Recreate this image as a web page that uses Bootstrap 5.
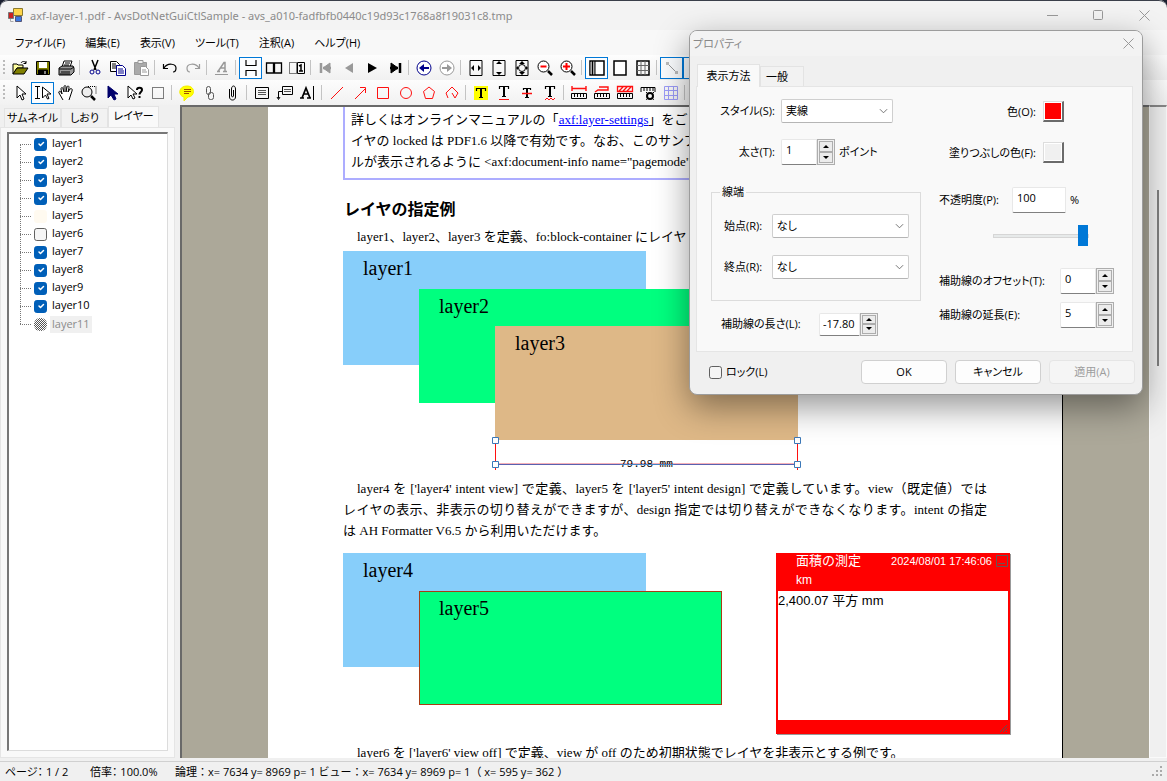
<!DOCTYPE html>
<html lang="ja">
<head>
<meta charset="utf-8">
<meta name="viewport" content="width=device-width, initial-scale=1">
<title>axf-layer-1.pdf - AvsDotNetGuiCtlSample</title>
<link href="https://cdn.jsdelivr.net/npm/bootstrap@5.3.0/dist/css/bootstrap.min.css" rel="stylesheet">
<style>
:root{--ui:"Open Sans","Noto Sans CJK JP",sans-serif;--doc:"Liberation Serif","Noto Sans CJK JP",serif}
body{font:11px/16px var(--ui);font-feature-settings:"palt";color:#000;background:#1b2030}
button,input,select{font:inherit;font-feature-settings:inherit;color:inherit}
.app-window{background:#f0f0f0;border-radius:8px 8px 0 0}
.title-strip{height:30px;background:#f3f3f3;color:#8b8b8b;border-radius:8px 8px 0 0;border-top:1px solid #3a3f4a;padding-left:8px;font-family:"Noto Sans",sans-serif}
.caption-btn{width:46px;height:29px;border:0;background:none;padding:0;color:#888}
.menu-strip{height:25px;background:#f8f8f8;padding-left:15px;gap:20px}
.menu-strip a{color:#000;text-decoration:none}
.tool-strip{height:25px;padding-left:3px;background:linear-gradient(#fdfdfd,#f1f1f1)}
.grip{width:2px;height:15px;margin-right:3px;background:repeating-linear-gradient(#bbb 0 2px,transparent 2px 4px)}
.tool-strip button{width:23px;height:22px;padding:0;border:1px solid transparent;background:none;display:flex;align-items:center;justify-content:center;flex:none}
.tool-strip button.on{border-color:#0078d7;background:#fbfdff}
.tool-strip i{width:1px;height:15px;background:#c3c3c3;margin:0 3px 0 2px;flex:none}
svg{display:block;fill:none;stroke:#000;stroke-width:1}
.ic{width:18px;height:18px}
.red{stroke:#ff1010}
.gray{stroke:#999}
.side{width:175px;padding-top:1px}
.side-tabs{height:21px}
.side-tab,.dlg-tab{border:1px solid #e3e3e3;border-bottom:0;background:#f2f2f2;padding:0}
.side-tab{height:19px;white-space:nowrap}
.side-tab.cur{height:21px;background:#f9f9f9;z-index:1;padding-bottom:2px}
.side-body{background:#f9f9f9;border:1px solid #e5e5e5;padding:4px 6px 6px 6px}
.tree{border:1px solid #dcdcdc;border-top:2px solid #777;border-left:2px solid #777;background:#fff;padding:1px 0 0 11px}
.tree li{height:18px;position:relative;padding-left:14px;display:flex;align-items:center;gap:5px}
.tree li::before{content:"";position:absolute;left:0;top:9px;width:11px;border-top:1px dotted #777}
.tree li::after{content:"";position:absolute;left:0;top:9px;height:18px;border-left:1px dotted #777}
.tree li:last-child::after{display:none}
.tree label{padding:0 0 2px}
.tick{width:13px;height:13px;margin:0;border:1px solid #606060;border-radius:3px;flex:none;background-color:#f5f5f5;float:none}
.tick:checked{background-color:#005fb8;border-color:#005fb8;background-size:10px}
.tick.pale{background:#fffaf0;border-color:#fffaf0}
.tick.mesh{opacity:1;border:0;border-radius:6px;background:repeating-conic-gradient(#555 0 25%,#fff 0 50%) 0 0/2px 2px}
.mesh+label{background:#f0f0f0;color:#8b8b8b;padding:0 2px 1px;margin-left:-2px}
.viewer{border-top:2px solid #696969;border-left:2px solid #696969;background:#aca899;margin-left:5px}
.sheet{background:#fff;border-right:1px solid #000;margin:0 86px;padding:0 75px;font:13px/21px var(--doc);font-feature-settings:normal;color:#000}
.ln{display:block;text-align-last:justify;white-space:nowrap}
.first{padding-left:14px}
.notice{border:2px solid #adadff;border-top:0;padding:2px 6px 6px;height:73px}
.notice div,.flow-line{white-space:nowrap}
.notice a{color:#00f}
.sheet h2{font:bold 16px/24px "Liberation Sans","Noto Sans CJK JP",sans-serif;margin:18px 0 4px 1px}
.stage{position:relative;font-size:20px}
.lay{position:absolute;width:303px;height:114px;padding:7px 20px}
.sky{background:#87cefa;left:0;top:0}
.spring{background:#00ff7f;left:76px;top:38px}
.wood{background:#deb887;left:152px;top:75px}
.measure{position:absolute;left:147px;top:183px}
.measure text{font:11px "Liberation Mono",monospace;fill:#000;stroke:none}
.memo{position:absolute;left:433px;top:0;width:234px;height:181px;background:#f00;font:13px/20px "Liberation Sans","Noto Sans CJK JP",sans-serif;border:solid #f00;border-width:0 2px;box-shadow:1px 1px 0 #999}
.memo header{height:38px;color:#fff;padding:0 0 0 18px;line-height:18px}
.memo header .unit{font-size:12px}
.memo .when{font-size:11px}
.memo-body{height:129px;background:#fff;line-height:19px}
.vbar{width:18px;background:#f0f0f0;border:1px solid #fafafa;border-top:2px solid #888;padding:83px 0 0 7px}
.vbar div{width:2px;height:176px;background:#808080}
.status{height:20px;border-top:1px solid #d0d0d0;padding-left:5px;margin-top:3px;white-space:pre}
.status .coords{font-feature-settings:normal}
.dlg{position:absolute;right:24px;top:30px;width:454px;border:1px solid #9c9c9c;border-radius:8px;background:#f0f0f0;box-shadow:0 12px 34px rgba(0,0,0,.42);z-index:5;overflow:clip}
.dlg-title{height:25px;background:#f3f3f3;color:#888;padding-left:3px}
.dlg-tabs{height:30px;padding-left:7px}
.dlg-tab{height:20px;width:44px;text-align:left;padding-left:5px}
.dlg-tab.cur{height:23px;width:63px;background:#f9f9f9;padding:0;text-align:center;z-index:1;margin-bottom:-1px}
.dlg-body{margin:0 9px 0 6px;height:266px;border:1px solid #e5e5e5;background:#f9f9f9}
.dlg-foot{height:42px;padding:0 7px 2px 19px}
.colL{width:224px}
.r24,.r26,.r21{display:flex;align-items:center;white-space:nowrap}
.r24{height:24px}.r26{height:26px}.r21{height:21px}
.l78{width:78px;margin-right:6px;text-align:right}
.pick{appearance:none;height:24px;width:112px;border:1px solid #cfcfcf;border-bottom-color:#b5b5b5;border-radius:2px;padding:0 4px;background:#fff url("data:image/svg+xml,%3Csvg xmlns='http://www.w3.org/2000/svg' viewBox='0 0 10 6'%3E%3Cpath d='M1 1l4 4 4-4' fill='none' stroke='%23666'/%3E%3C/svg%3E") no-repeat right 4px center/9px 6px}
.pick.wide{width:138px}
.num{height:26px;border:1px solid #e8e8e8;border-bottom-color:#808080;padding:0 4px 5px;background:#fff;width:36px;border-radius:2px 0 0 2px}
.spin{width:18px;height:26px;border:1px solid #adadad;padding:1px;background:#f0f0f0;display:flex;flex-direction:column}
.spin button{flex:1;padding:0;border:1px solid #adadad;background:#ececec;display:flex;align-items:center;justify-content:center}
.spin svg{fill:#000;stroke:none}
.low .num{height:23px;width:41px;padding:0 3px 2px}.low .spin{height:23px}
fieldset.ends{margin:19px 0 0 14px;border:1px solid #dcdcdc;padding:14px 11px 21px 12px;width:210px}
.ends legend{float:none;width:auto;font-size:11px;line-height:16px;height:16px;margin:0 0 0 -4px;padding:0 2px}
.ends label{width:48px}
.swatch{width:21px;height:21px;padding:0;border:1px solid #ddd;border-right:2px solid #6b6b6b;border-bottom:2px solid #6b6b6b;background:#f0f0f0;box-shadow:inset 0 0 0 1px #fff}
.slide{appearance:none;width:96px;height:21px;margin:12px 0 22px 72px;background:none;display:block}
.slide::-webkit-slider-runnable-track{height:4px;background:#e7eaea;border:1px solid #d6d6d6}
.slide::-webkit-slider-thumb{appearance:none;width:10px;height:21px;margin-top:-10px;background:#0078d7}
.push{width:86px;height:24px;border:1px solid #d0d0d0;border-radius:4px;background:#fdfdfd;padding:0}
.push:disabled{color:#9d9d9d;background:#f5f5f5;border-color:#e5e5e5}
</style>
</head>
<body>
<div class="app-window vh-100 d-flex flex-column overflow-hidden position-relative">

<header class="title-strip d-flex align-items-center flex-shrink-0">
  <svg width="15" height="15" viewBox="0 0 15 15"><path d="M5.500.5h9v7h-9z" fill="#ffd54a" stroke="#8a7a30"/><path d="M.5 4.500h5v6h-5z" fill="#c22" stroke="#777"/><path d="M7.500 8.500h6v5h-6z" fill="#3b78e0" stroke="#557"/><path d="M2.500 11v2.500h3" stroke="#aaa"/></svg>
  <span class="flex-fill" style="padding-left:7px">axf-layer-1.pdf - AvsDotNetGuiCtlSample - avs_a010-fadfbfb0440c19d93c1768a8f19031c8.tmp</span>
  <button class="caption-btn" aria-label="最小化"><svg class="mx-auto gray" width="11" height="11"><path d="M0 5.500h11"/></svg></button>
  <button class="caption-btn" aria-label="最大化"><svg class="mx-auto gray" width="11" height="11"><rect x=".5" y=".5" width="9" height="9" rx="1"/></svg></button>
  <button class="caption-btn" aria-label="閉じる"><svg class="mx-auto gray" width="11" height="11"><path d="M.5.5l10 10M10.500.5l-10 10"/></svg></button>
</header>

<nav class="menu-strip d-flex align-items-center flex-shrink-0">
  <a href="#">ファイル(F)</a><a href="#">編集(E)</a><a href="#">表示(V)</a><a href="#">ツール(T)</a><a href="#">注釈(A)</a><a href="#">ヘルプ(H)</a>
</nav>

<div class="tool-strip d-flex align-items-center flex-shrink-0">
  <span class="grip"></span>
  <button aria-label="開く"><svg class="ic"><path d="M2 5h4l1 1h5v3H6l-4 6z" fill="#ffffa0"/><path d="M2 15l4-6h11l-4 6z" fill="#808000"/><path d="M10 4c1-2 4-2 5 0m0-2v2.500h-2.500"/></svg></button>
  <button aria-label="保存"><svg class="ic"><path d="M2.500 2.500h13v13h-13z" fill="#808000"/><path d="M5 3h8v6H5z" fill="#fff" stroke="none"/><path d="M4.500 11h9v4h-9z" fill="#000"/><path d="M11 12v3" stroke="#fff"/></svg></button>
  <button aria-label="印刷"><svg class="ic"><path d="M5 8l2-6h8l-2 6z" fill="#fff"/><path d="M8 4h5M7 6h5"/><path d="M2 9l3-2h11l1 2v4l-3 3H2z" fill="#999"/><path d="M2 10h12l3-2M4 13h9M3 15h10" /></svg></button>
  <i></i>
  <button aria-label="切り取り"><svg class="ic"><path d="M6 1l4 10M12 1L8 11" stroke-width="1.500"/><circle cx="6" cy="13" r="2" stroke="#00008b"/><circle cx="12" cy="13" r="2" stroke="#00008b"/></svg></button>
  <button aria-label="コピー"><svg class="ic"><path d="M1.500 2.500h6l3 3v7h-9z" fill="#fff"/><path d="M3 5h4M3 7h5M3 9h5"/><path d="M7.500 6.500h6l3 3v7h-9z" fill="#fff" stroke="#00008b"/><path d="M9 10h5M9 12h6M9 14h6" stroke="#00008b"/></svg></button>
  <button aria-label="貼り付け"><svg class="ic gray"><path d="M2.500 3.500h12v12h-12z" fill="#aaa"/><path d="M6 1.500h5v3H6z" fill="#eee"/><path d="M8.500 7.500h5l3 3v6h-8z" fill="#fff"/><path d="M10 11h4M10 13h5"/></svg></button>
  <i></i>
  <button aria-label="元に戻す"><svg class="ic"><path d="M2.500 5v4.500h4.500M3 9c4-6 12-4 12 0 0 2-1 4-3 4" stroke-width="1.200"/></svg></button>
  <button aria-label="やり直し"><svg class="ic gray"><path d="M15.500 5v4.500H11M15 9C11 3 3 5 3 9c0 2 1 4 3 4" stroke-width="1.200"/></svg></button>
  <i></i>
  <button aria-label="文字"><svg class="ic gray"><path d="M4 12.500h3M10 12.500h4M5 12.500l6-9h1v9M7 9h5" stroke-width="1.500"/><path d="M2 15.500h13"/></svg></button>
  <i></i>
  <button class="on" aria-label="連続ページ"><svg class="ic"><path d="M4 1v5.500h10V1M4 17v-5.500h10V17" stroke-width="1.200"/></svg></button>
  <button aria-label="見開き"><svg class="ic"><path d="M1.500 4h7v10h-7zM9.500 4h7v10h-7z" stroke-width="1.300"/></svg></button>
  <button aria-label="表紙付き見開き"><svg class="ic"><path d="M1.500 3.500h7v11h-7z" stroke-dasharray="1 1"/><path d="M9.500 3.500h7v11h-7z"/><path d="M11 7l2-1v6M11 12h4" stroke-width="1.500"/></svg></button>
  <i></i>
  <button aria-label="先頭ページ"><svg class="ic gray"><path d="M13 4v10L6 9z" fill="#999"/><path d="M4 4v10M6 9h8" stroke-width="2.500"/></svg></button>
  <button aria-label="前ページ"><svg class="ic"><path d="M13 4v10L5 9z" fill="#999" stroke="none"/></svg></button>
  <button aria-label="次ページ"><svg class="ic"><path d="M5 4v10l9-5z" fill="#000" stroke="none"/></svg></button>
  <button aria-label="最終ページ"><svg class="ic"><path d="M5 4v10l7-5z" fill="#000"/><path d="M14 4v10M4 9h8" stroke-width="2.500"/></svg></button>
  <i></i>
  <button aria-label="戻る"><svg class="ic"><circle cx="9" cy="9" r="7" fill="#fff" stroke="#00008b"/><path d="M4 9l5-4v3h5v2H9v3z" fill="#00008b" stroke="none"/></svg></button>
  <button aria-label="進む"><svg class="ic gray"><circle cx="9" cy="9" r="7" fill="#fff"/><path d="M14 9L9 5v3H4v2h5v3z" fill="#999" stroke="none"/></svg></button>
  <i></i>
  <button aria-label="幅に合わせる"><svg class="ic"><path d="M3 1.500h12v15H3z"/><path d="M4 9l3-3v6zM14 9l-3-3v6z" fill="#000" stroke="none"/></svg></button>
  <button aria-label="高さに合わせる"><svg class="ic"><path d="M3 1.500h12v15H3z"/><path d="M9 2l3 3H6zM9 16l3-3H6z" fill="#000" stroke="none"/></svg></button>
  <button aria-label="全体表示"><svg class="ic"><path d="M3 1.500h12v15H3z"/><circle cx="9" cy="9" r="3.500"/><path d="M9 2l3 3H6zM9 16l3-3H6zM3 9l2-2v4zM15 9l-2-2v4z" fill="#000" stroke="none"/></svg></button>
  <button aria-label="縮小"><svg class="ic"><circle cx="7.500" cy="7.500" r="5.500" fill="#fff"/><path d="M12 12l4 4" stroke-width="2.500"/><path d="M4.500 7.500h6" stroke="#f00" stroke-width="2"/></svg></button>
  <button aria-label="拡大"><svg class="ic"><circle cx="7.500" cy="7.500" r="5.500" fill="#fff"/><path d="M12 12l4 4" stroke-width="2.500"/><path d="M4 7.500h7M7.500 4v7" stroke="#f00" stroke-width="2"/></svg></button>
  <i></i>
  <button class="on" aria-label="ナビゲーション"><svg class="ic"><path d="M2 2h14v14H2z" stroke-width="1.500" fill="#fff"/><path d="M2.500 3H7v12H2.500z" fill="#aaa" stroke="none"/><path d="M4.500 2v14M7 2v14"/></svg></button>
  <button aria-label="余白"><svg class="ic"><path d="M3 2h12v14H3z" stroke-width="1.500" fill="#fff"/></svg></button>
  <button aria-label="グリッド"><svg class="ic"><path d="M3 2h12v14H3z" stroke-width="1.500"/><path d="M7 2v14M11 2v14M3 6.500h12M3 11.500h12" stroke="#666"/></svg></button>
  <i></i>
  <button class="on" aria-label="線"><svg class="ic gray"><path d="M4 4l10 10"/><path d="M3 3h3v3H3zM12 12h3v3h-3z" fill="#bbb" stroke="none"/></svg></button>
  <button class="on" aria-label="端点"></button>
</div>

<div class="tool-strip d-flex align-items-center flex-shrink-0">
  <span class="grip"></span>
  <button aria-label="選択"><svg class="ic"><path d="M6 2v12l3-3 2 5 2-1-2-5h4z" fill="#fff"/></svg></button>
  <button class="on" aria-label="テキスト選択"><svg class="ic"><path d="M1 2.500h5M1 14.500h5M3.500 2.500v12M8.500 3v11l3-3 2 4 1.500-.500-2-4.500h4z" fill="#fff"/></svg></button>
  <button aria-label="手のひら"><svg class="ic"><path d="M6 16l-4-7c-1-2 1-2 2-1l1 2-1-5c0-2 2-2 2 0l1 3V3c0-2 2-2 2 0v5l1-5c1-2 2-1 2 1l-1 4 2-3c1-1 3 0 2 2l-3 9" fill="#fff"/></svg></button>
  <button aria-label="領域拡大"><svg class="ic"><circle cx="7" cy="8" r="5" fill="#eee"/><path d="M11 12l4 4" stroke-width="2.500"/><path d="M8 2.500h8v8" stroke-dasharray="1 1"/></svg></button>
  <button aria-label="注釈選択"><svg class="ic"><path d="M5 2v12l3-3 3 5 2-1-2-5h4z" fill="#00006b" stroke="#00006b"/></svg></button>
  <button aria-label="ヘルプ選択"><svg class="ic"><path d="M2 2v12l3-3 2 4 2-1-2-4h4z" fill="#fff"/><path d="M11 6c0-3 5-3 5 0 0 2-2.500 2-2.500 4.500M13.500 12v2" stroke-width="2"/></svg></button>
  <button aria-label="矩形選択"><svg class="ic"><path d="M3.500 3.500h11v11h-11z" stroke-dasharray="1 1"/></svg></button>
  <i></i>
  <button aria-label="ノート"><svg class="ic"><path d="M9 2c9 0 8 11 1 11l-4 4v-4C0 12 0 2 9 2z" fill="#ff0" stroke="#f4ee00"/><path d="M6 5.500h7M6 7.500h7M6 9.500h5" stroke="#a05000"/></svg></button>
  <button aria-label="リンク"><svg class="ic gray"><rect x="5.500" y="2.500" width="4" height="8" rx="2" stroke="#555"/><rect x="7.500" y="8.500" width="5" height="7" rx="2" stroke="#555"/></svg></button>
  <button aria-label="添付"><svg class="ic"><path d="M5.500 5v8c0 4 6 4 6 0V5c0-4-4-4-4 0v7c0 1 2 1 2 0V6"/></svg></button>
  <i></i>
  <button aria-label="テキストボックス"><svg class="ic"><path d="M2.500 3.500h13v11h-13z"/><path d="M5 6.500h8M5 8.500h8M5 10.500h8" stroke="#555"/></svg></button>
  <button aria-label="吹き出し"><svg class="ic"><path d="M6.500 2.500h10v8h-10zM6 7.500H2.500v7M1 13l1.500 2.500L4 13"/><path d="M8 5.500h7M8 7.500h7" stroke="#555"/></svg></button>
  <button aria-label="文字入力"><svg class="ic"><path d="M1 14h4M8 14h4M3 14L7 4l4 10M4 10h5" stroke-width="1.700"/><path d="M14.500 2v14"/></svg></button>
  <i></i>
  <button aria-label="直線"><svg class="ic red"><path d="M3 15L15 3"/></svg></button>
  <button aria-label="矢印"><svg class="ic red"><path d="M4 15L15 4M9 3.500h5.500V9"/></svg></button>
  <button aria-label="四角形"><svg class="ic red"><path d="M3.500 3.500h11v11h-11z"/></svg></button>
  <button aria-label="楕円"><svg class="ic red"><circle cx="9" cy="9" r="5.500"/></svg></button>
  <button aria-label="多角形"><svg class="ic red"><path d="M9 3l5.500 4.500-2 7h-7l-2-7z"/></svg></button>
  <button aria-label="折れ線"><svg class="ic red"><path d="M5 14L3 9l6-6 6 6-3 5-3-5"/></svg></button>
  <i></i>
  <button aria-label="ハイライト"><svg class="ic"><path d="M2 2h14v14H2z" fill="#ff0" stroke="none"/><path d="M4.500 7V4.500h9V7M7 13.500h4" stroke-width="1.200"/><path d="M9 4v10" stroke-width="2"/></svg></button>
  <button aria-label="下線"><svg class="ic"><path d="M4.500 5V2.500h9V5M7 12.500h4" stroke-width="1.200"/><path d="M9 3v9" stroke-width="2"/><path d="M4 15.500h10" class="red"/></svg></button>
  <button aria-label="取り消し線"><svg class="ic"><path d="M5.500 6V4.500h7V6M7 13.500h4" stroke-width="1.200"/><path d="M9 4v10" stroke-width="2"/><path d="M4 9.500h10" class="red" stroke-width="1.500"/></svg></button>
  <button aria-label="波線"><svg class="ic"><path d="M4.500 5V2.500h9V5M7 12.500h4" stroke-width="1.200"/><path d="M9 3v9" stroke-width="2"/><path d="M4 16l2-2 2 2 2-2 2 2 2-2" class="red"/></svg></button>
  <i></i>
  <button aria-label="距離測定"><svg class="ic"><path d="M2 2v5M16 2v5M2 4.500h14" class="red" stroke-width="1.400"/><path d="M1.500 14.500h15v-5h-15zM4.500 10v3M7.500 10v3M10.500 10v3M13.500 10v3"/></svg></button>
  <button aria-label="周囲測定"><svg class="ic"><path d="M2 8l3-2h10V3H6" class="red" stroke-width="1.400"/><path d="M1.500 14.500h15v-5h-15zM4.500 10v3M7.500 10v3M10.500 10v3M13.500 10v3"/></svg></button>
  <button aria-label="面積測定"><svg class="ic"><path d="M1.500 2.500h15v5h-15zM3 7l4-4M7 7l4-4M11 7l4-4" class="red" stroke-width="1.300"/><path d="M1.500 14.500h15v-5h-15zM4.500 10v3M7.500 10v3M10.500 10v3M13.500 10v3"/></svg></button>
  <button aria-label="測定設定"><svg class="ic"><path d="M2 8V3.500h14V8M5 4v3M8 4v3M11 4v3M14 4v3"/><circle cx="11" cy="12" r="3" stroke-width="2"/><path d="M7 8l8 8M15 8l-8 8" stroke-dasharray="2 7"/></svg></button>
  <button aria-label="方眼"><svg class="ic"><path d="M2.500 2.500h13v13h-13zM6.500 2v14M11.500 2v14M2 6.500h14M2 11.500h14" stroke="#9c9cf8"/></svg></button>
  <i></i>
</div>

<main class="d-flex flex-fill overflow-hidden">
  <aside class="side d-flex flex-column flex-shrink-0">
    <div class="side-tabs d-flex align-items-end ps-1">
      <button class="side-tab" style="width:57px">サムネイル</button><button class="side-tab" style="width:47px">しおり</button><button class="side-tab cur" style="width:51px">レイヤー</button>
    </div>
    <div class="side-body flex-fill d-flex">
      <ul class="tree list-unstyled flex-fill m-0">
        <li><input class="form-check-input tick" type="checkbox" id="y1" checked><label for="y1">layer1</label></li>
        <li><input class="form-check-input tick" type="checkbox" id="y2" checked><label for="y2">layer2</label></li>
        <li><input class="form-check-input tick" type="checkbox" id="y3" checked><label for="y3">layer3</label></li>
        <li><input class="form-check-input tick" type="checkbox" id="y4" checked><label for="y4">layer4</label></li>
        <li><input class="form-check-input tick pale" type="checkbox" id="y5"><label for="y5">layer5</label></li>
        <li><input class="form-check-input tick" type="checkbox" id="y6"><label for="y6">layer6</label></li>
        <li><input class="form-check-input tick" type="checkbox" id="y7" checked><label for="y7">layer7</label></li>
        <li><input class="form-check-input tick" type="checkbox" id="y8" checked><label for="y8">layer8</label></li>
        <li><input class="form-check-input tick" type="checkbox" id="y9" checked><label for="y9">layer9</label></li>
        <li><input class="form-check-input tick" type="checkbox" id="y10" checked><label for="y10">layer10</label></li>
        <li><input class="form-check-input tick mesh" type="checkbox" id="y11"><label for="y11">layer11</label></li>
      </ul>
    </div>
  </aside>

  <section class="viewer flex-fill overflow-hidden">
    <article class="sheet">
      <div class="notice overflow-hidden">
        <div>詳しくはオンラインマニュアルの「<a href="#">axf:layer-settings</a>」をご</div>
        <div>イヤの locked は PDF1.6 以降で有効です。なお、このサンプ</div>
        <div>ルが表示されるように &lt;axf:document-info name="pagemode"</div>
      </div>
      <h2>レイヤの指定例</h2>
      <p class="flow-line mb-1 first">layer1、layer2、layer3 を定義、fo:block-container にレイヤ</p>
      <div class="stage" style="height:227px">
        <div class="lay sky">layer1</div><div class="lay spring">layer2</div><div class="lay wood">layer3</div>
        <svg class="measure" width="312" height="38"><path d="M5.500 6v30M307.500 6v30" stroke="#ff1010"/><path d="M6 29.500h301" stroke="#f5b0b8"/><path d="M6 30.500h301" stroke="#5a62b0"/><text x="130" y="33">79.98 mm</text><path d="M130 30.500h54" stroke="#4682c4"/><path d="M2.500 3.500h6v6h-6zM2.500 27.500h6v6h-6zM304.500 3.500h6v6h-6zM304.500 27.500h6v6h-6z" fill="#fff" stroke="#3c78b8"/></svg>
      </div>
      <p class="m-0"><span class="ln first">layer4 を ['layer4' intent view] で定義、layer5 を ['layer5' intent design] で定義しています。view（既定値）では</span>
      <span class="ln">レイヤの表示、非表示の切り替えができますが、design 指定では切り替えができなくなります。intent の指定</span>
      <span class="d-block">は AH Formatter V6.5 から利用いただけます。</span></p>
      <div class="stage" style="height:189px;margin-top:12px">
        <div class="lay sky">layer4</div><div class="lay spring" style="border:1px solid #a83c14;padding:6px 19px">layer5</div>
        <div class="memo">
          <header><div class="d-flex justify-content-between align-items-start" style="height:18px"><span style="line-height:16px">面積の測定</span><span class="when d-flex" style="line-height:17px">2024/08/01 17:46:06<svg class="ms-1" width="12" height="12" style="margin-top:2px"><path d="M.5.500h11v11H.500zM2 8.500h7" stroke="#655"/></svg></span></div><div class="unit">km</div></header>
          <div class="memo-body">2,400.07 平方 mm</div>
          <svg class="ms-auto mt-1" width="8" height="9"><path d="M0 8l7-7M3 8l4-4M6 8l1-1" stroke="#555"/></svg>
        </div>
      </div>
      <p class="flow-line m-0 first">layer6 を ['layer6' view off] で定義、view が off のため初期状態でレイヤを非表示とする例です。</p>
    </article>
  </section>
  <div class="vbar flex-shrink-0"><div></div></div>
</main>

<footer class="status d-flex align-items-center flex-shrink-0"><span style="width:85px">ページ： 1 / 2</span><span style="width:85px">倍率： 100.0%</span><span class="coords">論理：x= 7634 y= 8969 p= 1 ビュー：x= 7634 y= 8969 p= 1（ x= 595 y= 362 ）</span>
<svg class="ms-auto me-1" width="11" height="11"><path d="M8 1h2M8 5h2M8 9h2M4 5h2M4 9h2M0 9h2" stroke="#aaa" stroke-width="2"/></svg></footer>

<div class="dlg" role="dialog" aria-label="プロパティ">
  <div class="dlg-title d-flex align-items-center"><span class="flex-fill">プロパティ</span><button class="caption-btn" style="width:28px;height:24px" aria-label="閉じる"><svg class="gray mx-auto" width="11" height="11"><path d="M.5.5l10 10M10.500.5l-10 10"/></svg></button></div>
  <div class="dlg-tabs d-flex align-items-end"><button class="dlg-tab cur">表示方法</button><button class="dlg-tab">一般</button></div>
  <div class="dlg-body d-flex">
    <div class="colL">
      <div class="r24" style="margin-top:12px"><label class="l78" for="st">スタイル(S):</label><select class="pick" id="st"><option>実線</option></select></div>
      <div class="r26" style="margin-top:16px"><label class="l78" for="th">太さ(T):</label><input class="num" id="th" value="1"><span class="spin"><button aria-label="増"><svg width="6" height="3"><path d="M0 3l3-3 3 3z"/></svg></button><button aria-label="減"><svg width="6" height="3"><path d="M0 0l3 3 3-3z"/></svg></button></span><span class="ps-1">ポイント</span></div>
      <fieldset class="ends"><legend>線端</legend>
        <div class="r24"><label for="sp">始点(R):</label><select class="pick wide" id="sp"><option>なし</option></select></div>
        <div class="r24" style="margin-top:17px"><label for="ep">終点(R):</label><select class="pick wide" id="ep"><option>なし</option></select></div>
      </fieldset>
      <div class="r24 low" style="margin:11px 0 0 24px"><label for="ll" style="width:98px">補助線の長さ(L):</label><input class="num" id="ll" value="-17.80"><span class="spin"><button aria-label="増"><svg width="6" height="3"><path d="M0 3l3-3 3 3z"/></svg></button><button aria-label="減"><svg width="6" height="3"><path d="M0 0l3 3 3-3z"/></svg></button></span></div>
    </div>
    <div class="flex-fill">
      <div class="r21" style="margin-top:14px"><label for="c1" class="text-end" style="width:115px;margin-right:7px">色(O):</label><button class="swatch" id="c1" style="background:#f00"></button></div>
      <div class="r21" style="margin-top:20px"><label for="c2" class="text-end" style="width:115px;margin-right:7px">塗りつぶしの色(F):</label><button class="swatch" id="c2"></button></div>
      <div class="r26" style="margin:24px 0 0 18px"><label for="op" style="width:73px">不透明度(P):</label><input class="num" id="op" value="100" style="width:54px"><span class="ps-1">%</span></div>
      <input class="slide" type="range" value="100" aria-label="不透明度">
      <div class="r26" style="margin-left:18px"><label for="of" style="width:121px">補助線のオフセット(T):</label><input class="num" id="of" value="0"><span class="spin"><button aria-label="増"><svg width="6" height="3"><path d="M0 3l3-3 3 3z"/></svg></button><button aria-label="減"><svg width="6" height="3"><path d="M0 0l3 3 3-3z"/></svg></button></span></div>
      <div class="r26" style="margin:8px 0 0 18px"><label for="ex" style="width:121px">補助線の延長(E):</label><input class="num" id="ex" value="5"><span class="spin"><button aria-label="増"><svg width="6" height="3"><path d="M0 3l3-3 3 3z"/></svg></button><button aria-label="減"><svg width="6" height="3"><path d="M0 0l3 3 3-3z"/></svg></button></span></div>
    </div>
  </div>
  <div class="dlg-foot d-flex align-items-center gap-2"><span class="d-flex align-items-center me-auto"><input class="form-check-input tick me-1" type="checkbox" id="lk"><label for="lk">ロック(L)</label></span><button class="push">OK</button><button class="push">キャンセル</button><button class="push" disabled>適用(A)</button></div>
</div>
</div>
<script src="https://cdn.jsdelivr.net/npm/bootstrap@5.3.0/dist/js/bootstrap.bundle.min.js"></script>
</body>
</html>
